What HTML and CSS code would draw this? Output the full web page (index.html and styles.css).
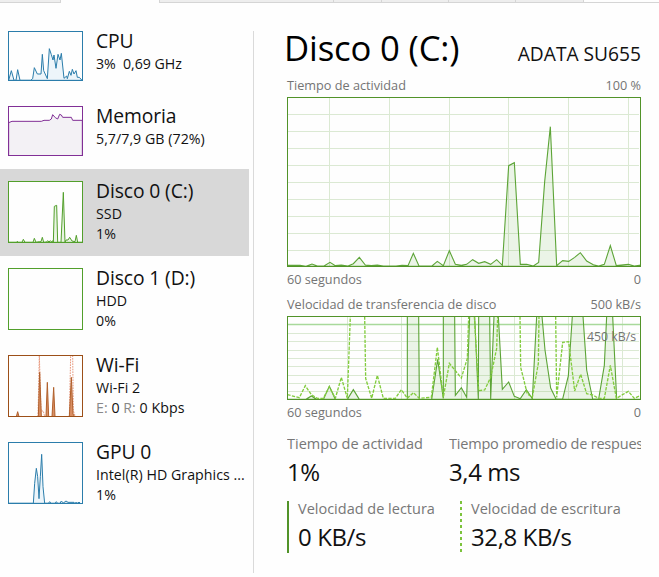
FILE: index.html
```html
<!DOCTYPE html>
<html lang="es">
<head>
<meta charset="utf-8">
<title>Administrador de tareas</title>
<link rel="stylesheet" href="styles.css">
</head>
<body>
<div class="window">
  <nav class="tabs"><i></i><i class="active"></i><i></i><i></i><i></i><i></i><i></i><i class="rest"></i></nav>
  <div class="content">
    <aside class="sidebar">
      <section class="item short">
        <svg class="mini blue" viewBox="24 93 225 150">
          <path class="area" d="M26 241 34 212 42 241H48L53 209 60 241H92L98 236 103 203 112 222H123L127 163 131 212 142 236 148 146 154 164 159 180 162 165 168 205 174 163 180 180 184 160 192 235 200 228 202 236 208 214 213 226 217 208 222 222 228 212 232 232H238L246 241Z"/>
          <rect class="frame" x="25.5" y="94.5" width="222" height="147"/>
        </svg>
        <div class="info"><h2>CPU</h2><p class="cpu">3%&nbsp; 0,69 GHz</p></div>
      </section>
      <section class="item short">
        <svg class="mini purple" viewBox="24 318 225 150">
          <path class="area" d="M26 467V368L36 364H124L132 361H148L154 357 158 344 166 353 173 357 179 343 184 345 188 352H214L218 361H247V467Z"/>
          <rect class="frame" x="25.5" y="319.500" width="222" height="147"/>
        </svg>
        <div class="info"><h2>Memoria</h2><p>5,7/7,9 GB (72%)</p></div>
      </section>
      <section class="item selected">
        <svg class="mini green" viewBox="24 48 225 186">
          <path class="area" d="M26 232H50L52 229 54 232H66L70 223 75 232H99L103 220 108 232 118 230H123L127 217 131 232 140 231 143 227 147 231 151 227 155 231 158 227 160 232 163 124 170 121 173 232H183L190 82 195 232 198 225H204L209 217 216 228 225 230 229 211 233 232H247Z"/>
          <rect class="frame" x="25.5" y="49.5" width="222" height="183"/>
        </svg>
        <div class="info"><h2>Disco 0 (C:)</h2><p>SSD</p><p>1%</p></div>
      </section>
      <section class="item">
        <svg class="mini green" viewBox="24 48 225 186"><rect class="frame" x="25.5" y="49.5" width="222" height="183"/></svg>
        <div class="info"><h2>Disco 1 (D:)</h2><p>HDD</p><p>0%</p></div>
      </section>
      <section class="item">
        <svg class="mini brown" viewBox="24 45 225 186">
          <path class="receive" d="M114 230 118 46 123 213 130 213 134 230M208 230 212 46M218 46 220 212 226 230"/>
          <path class="area" d="M26 230H49L53 215 57 230H115L119 97 124 230H138L142 127 146 230H156L161 142 165 230H208L214 112 219 222 224 230H247Z"/>
          <rect class="frame" x="25.5" y="46.5" width="222" height="183"/>
        </svg>
        <div class="info"><h2>Wi-Fi</h2><p>Wi-Fi 2</p><p><span>E:</span> 0 <span>R:</span> 0 Kbps</p></div>
      </section>
      <section class="item">
        <svg class="mini blue" viewBox="24 306 225 186">
          <path class="area" d="M26 490H100L104 430 109 385 113 410 117 476 121 410 125 343 129 440 134 490H145L149 485 153 490H165L169 485 173 490H180L184 483 190 489 198 483 204 487H222L225 490 229 486 233 490 237 486 241 490Z"/>
          <rect class="frame" x="25.5" y="307.500" width="222" height="183"/>
        </svg>
        <div class="info"><h2>GPU 0</h2><p>Intel(R) HD Graphics ...</p><p>1%</p></div>
      </section>
    </aside>

    <main class="detail">
      <header><h1>Disco 0 (C:)</h1><span class="model">ADATA SU655</span></header>
      <div class="caption top"><span>Tiempo de actividad</span><span>100 %</span></div>
      <svg class="chart activity" viewBox="21 21 1062 510">
        <path class="grid" d="M148.500 21V531M328.500 21V531M508.500 21V531M685.500 21V531M865.500 21V531M1045.500 21V531M21 73.500H1077M21 124.500H1077M21 175.500H1077M21 226.500H1077M21 277.500H1077M21 328.500H1077M21 379.500H1077M21 430.500H1077M21 481.500H1077"/>
        <path class="read" d="M22 526 60 526 78 529 96 522 112 528 132 528 150 517 166 527 184 525 204 528 220 521 238 502 256 525 274 527 292 525 310 528 348 528 366 526 384 527 400 490 417 528 456 528 472 514 490 527 508 482 526 523 544 526 560 523 578 509 596 520 614 515 632 523 650 509 667 526 686 227 703 218 721 523 740 523 760 528 776 517 794 275 811 110 830 527 848 512 866 514 884 502 901 488 920 513 940 524 956 528 973 523 991 467 1009 527 1045 523 1063 528 1082 525V529H22Z"/>
        <rect class="frame" x="22.500" y="22.500" width="1059" height="507"/>
      </svg>
      <div class="caption axis"><span>60 segundos</span><span>0</span></div>
      <div class="caption transfer-title"><span>Velocidad de transferencia de disco</span><span>500 kB/s</span></div>
      <div class="transfer">
        <svg class="chart" viewBox="21 78 1062 252">
          <path class="grid" d="M202.500 78V330M364.500 78V330M544.500 78V330M703.500 78V330M865.500 78V330M1027.500 78V330M21 130.500H1077M21 154.500H1077M21 181.500H1077M21 205.500H1077M21 229.500H1077M21 256.500H1077M21 280.500H1077M21 304.500H1077"/>
          <path class="limit" d="M21 103.500H1080"/>
          <path class="read" d="M22 328H78L94 318 110 328H130L148 289 166 328H202L220 299 238 328H382V79H416L418 328H455L473 208 490 325V79H524L526 316 544 293 560 322 569 79H584L595 328 596 79H629L632 328 642 79H655L667 298 686 276 703 319 721 326 739 299 757 326 770 79H786L795 180 812 294 828 327H848L865 258 877 79H909L920 240 938 327H956L973 226 980 79H998L1010 328H1082Z"/>
          <path class="write" d="M22 314 58 323 76 287 94 314 112 325H130L148 290 166 325 184 262 202 325 211 79M254 79 257 265 275 325 292 256 310 325H346L364 299 382 325 400 308 418 325 454 322 472 172 490 322 508 220 526 242 544 264 562 205 566 79M583 79 596 302 614 300 632 262 650 175 653 79M720 79 722 232 742 312 757 322 775 220 777 79M827 79 830 322 848 157 866 155 884 303 902 253 920 311 938 315 956 325H973L991 226 1009 325 1045 304 1063 325 1082 316"/>
          <rect class="frame" x="22.500" y="79.500" width="1059" height="249"/>
        </svg>
        <span class="limit-label">450 kB/s</span>
      </div>
      <div class="caption axis"><span>60 segundos</span><span>0</span></div>
      <div class="stats">
        <div class="stat"><span>Tiempo de actividad</span><b>1%</b></div>
        <div class="stat"><span class="response">Tiempo promedio de respuesta</span><b>3,4 ms</b></div>
      </div>
      <div class="stats rates">
        <div class="stat rate"><svg viewBox="0 0 3 52"><path d="M1 0V52" stroke="#529329" stroke-width="2"/></svg><div><span>Velocidad de lectura</span><b>0 KB/s</b></div></div>
        <div class="stat rate"><svg viewBox="0 0 3 52"><path d="M1 0V52" stroke="#7cc33c" stroke-width="2" stroke-dasharray="3 3"/></svg><div><span>Velocidad de escritura</span><b>32,8 KB/s</b></div></div>
      </div>
    </main>
  </div>
</div>
</body>
</html>
```
FILE: styles.css
```css
* { box-sizing: border-box; }
body { margin: 0; background: #fefefe; color: #111; font-family: "Open Sans", "Noto Sans", sans-serif; overflow: hidden; }
h1, h2, p { margin: 0; font-weight: 400; }
svg { display: block; flex: none; }
.window { width: 659px; height: 577px; display: flex; flex-direction: column; }
.tabs { height: 3px; flex: none; display: grid; grid-template-columns: 61px 99px 174px 48px 67px 67px 68px 75px; }
.tabs i { background: #eee; border-right: 1px solid #d5d5d5; border-bottom: 1px solid #d5d5d5; }
.tabs .active { background: #fefefe; border-bottom: 0; }
.tabs .rest { background: #fefefe; border-right: 0; }
.content { display: flex; flex: 1; }
.sidebar { width: 249px; padding-top: 16px; flex: none; }
.item { height: 87px; padding: 12px 0 0 8px; display: flex; gap: 13px; }
.item.short { height: 75px; }
.item.selected { background: #d8d8d8; }
.mini { width: 75px; height: 62px; background: #fefefe; }
.short .mini { height: 50px; }
.info { white-space: nowrap; margin-top: -3px; }
.info h2 { font-size: 19.3px; line-height: 26px; letter-spacing: -.1px; }
.info p { font-size: 14.2px; line-height: 20px; letter-spacing: .04px; }
.info p.cpu { letter-spacing: -.05px; }
.info span { color: #888; }
.frame { fill: none; stroke-width: 3; }
.area { stroke-width: 3; }
.blue { stroke: #2b7dab; fill: #edf5fa; }
.purple { stroke: #812f96; fill: #f3f1f5; }
.green { stroke: #529f2b; fill: #e9f4e3; }
.brown { stroke: #9c4f18; fill: #d98e63; }
.brown .area { stroke: #b0602c; }
.receive { stroke: #e8977c; stroke-width: 3; stroke-dasharray: 5 3; fill: none; }
.detail { width: 393px; margin: 28px 0 4px 4px; padding: 0 5px 0 33px; border-left: 1px solid #dadada; height: 542px; flex: none; display: flex; flex-direction: column; }
header { height: 44px; width: 354px; flex: none; display: flex; justify-content: space-between; align-items: baseline; white-space: nowrap; }
h1 { font-size: 34.7px; line-height: 34px; margin-left: -3px; letter-spacing: -.15px; color: #000; }
.model { font-size: 19.2px; }
.caption { width: 354px; display: flex; justify-content: space-between; font-size: 12.7px; line-height: 20px; color: #747474; height: 20px; flex: none; white-space: nowrap; }
.caption.top { margin-bottom: 2px; }
.chart { width: 354px; height: 84px; }
.chart.activity { height: 170px; }
.chart .frame { stroke: #529329; }
.grid { stroke: #dbe9d3; stroke-width: 3; fill: none; }
.read { stroke: #5ca436; stroke-width: 3.3px; fill: rgba(82, 166, 42, .11); }
.write { stroke: #82cc3d; stroke-width: 4; stroke-dasharray: 10 4; fill: none; }
.limit { stroke: #a8d99b; stroke-width: 4; }
.axis { margin-top: 2px; }
.transfer-title { margin-top: 5px; margin-bottom: 2px; }
.transfer { position: relative; }
.limit-label { position: absolute; right: 5px; top: 11px; font-size: 12.3px; line-height: 20px; color: #747474; }
.stats { display: grid; grid-template-columns: 162px 192px; width: 354px; margin-top: 12px; }
.stat { overflow: hidden; white-space: nowrap; }
.stat span { display: block; font-size: 14.5px; line-height: 20px; color: #777; }
.stat .response { letter-spacing: -.2px; }
.stat b { display: block; font-weight: 400; font-size: 24px; line-height: 32px; color: #111; letter-spacing: -.4px; margin-top: 2px; }
.rates { grid-template-columns: 173px 181px; margin-top: 11px; }
.rate { display: flex; gap: 8px; }
.rate svg { width: 3px; height: 52px; margin-top: 2px; }
```
